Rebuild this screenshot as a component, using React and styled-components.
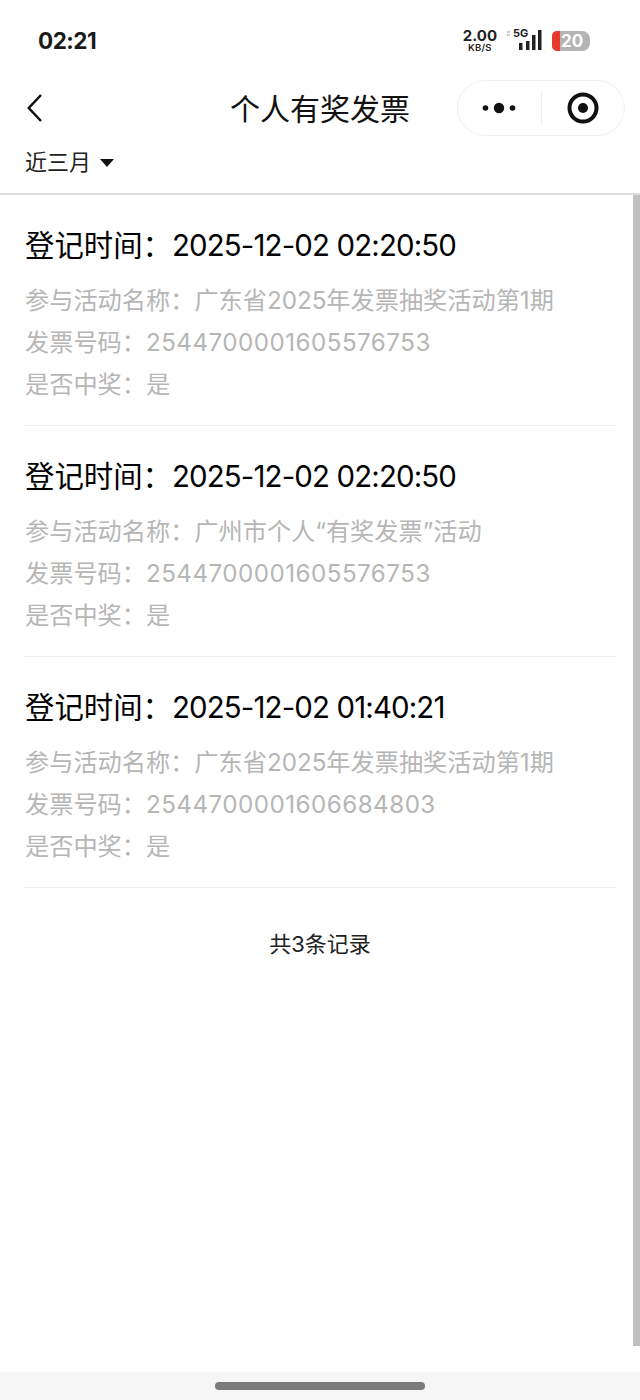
import React from 'react'
import styled, { createGlobalStyle } from 'styled-components'

const GlobalStyle = createGlobalStyle`
  html, body {
    margin: 0;
    padding: 0;
    background: #fff;
  }
  body {
    font-family: 'Inter', 'Noto Sans CJK SC', sans-serif;
  }
`

const Page = styled.div`
  position: relative;
  width: 640px;
  height: 1400px;
  overflow: hidden;
  display: flex;
  flex-direction: column;
  background: #fff;
`

const StatusBar = styled.div`
  height: 80px;
  flex: none;
  box-sizing: border-box;
  padding: 0 50px 0 38px;
  display: flex;
  align-items: center;
  justify-content: space-between;
`

const Clock = styled.div`
  font-size: 22.5px;
  font-weight: 700;
  letter-spacing: -0.5px;
  color: #1a1a1a;
`

const StatusRight = styled.div`
  display: flex;
  align-items: center;
  gap: 10px;
`

const Speed = styled.div`
  display: flex;
  flex-direction: column;
  align-items: center;
  font-weight: 700;
  color: #222;
`

const SpeedValue = styled.span`
  font-size: 15px;
  line-height: 14px;
`

const SpeedUnit = styled.span`
  font-size: 9.5px;
  line-height: 9px;
  font-weight: 600;
  letter-spacing: 0.3px;
`

const Battery = styled.div`
  width: 38px;
  height: 20px;
  margin-top: 2px;
  border-radius: 5px 8px 8px 5px;
  overflow: hidden;
  background: #b4b4b4;
  display: flex;
  align-items: center;
  color: #fff;
  font-size: 17px;
  font-weight: 700;
`

const BatteryFill = styled.div`
  width: 8px;
  height: 100%;
  background: #e8392b;
  flex: none;
`

const BatteryText = styled.span`
  margin-left: 1px;
  line-height: 20px;
`

const NavBar = styled.div`
  height: 56px;
  flex: none;
  box-sizing: border-box;
  padding: 0 15px 0 27px;
  display: flex;
  align-items: center;
  justify-content: space-between;
  position: relative;
`

const BackButton = styled.div`
  width: 15px;
  height: 28px;
  display: flex;
`

const NavTitle = styled.div`
  position: absolute;
  left: 230px;
  top: 0;
  line-height: 58px;
  font-size: 30px;
  color: #111;
`

const Capsule = styled.div`
  width: 168px;
  height: 56px;
  box-sizing: border-box;
  border: 1px solid #f1f1f1;
  border-radius: 28px;
  display: flex;
  align-items: center;
`

const CapsulePart = styled.div`
  flex: 1;
  height: 34px;
  display: flex;
  align-items: center;
  justify-content: center;
  & + & {
    border-left: 1px solid #eeeeee;
  }
`

const FilterBar = styled.div`
  height: 59px;
  flex: none;
  box-sizing: border-box;
  padding: 0 25px 10px;
  display: flex;
  align-items: center;
  gap: 9px;
  border-bottom: 2px solid #dcdcdc;
  font-size: 22px;
  color: #222;
`

const Caret = styled.span`
  width: 0;
  height: 0;
  margin-top: 7px;
  border-left: 7px solid transparent;
  border-right: 7px solid transparent;
  border-top: 8px solid #111;
`

const List = styled.div`
  padding: 0 25px;
  flex: 1;
`

const Record = styled.div`
  height: 231px;
  box-sizing: border-box;
  padding-top: 29px;
  border-bottom: 1px solid #efefef;
  &:last-of-type {
    height: 230px;
  }
`

const RecordTitle = styled.div`
  font-size: 29.4px;
  line-height: 44px;
  height: 56px;
  color: #000;
  white-space: nowrap;
`

const TimeText = styled.span`
  letter-spacing: -0.85px;
`

const RecordLine = styled.div`
  font-size: 24.2px;
  line-height: 42px;
  color: #b6b6b6;
  white-space: nowrap;
`

const NumberText = styled.span`
  letter-spacing: 0.47px;
`

const Total = styled.div`
  text-align: center;
  font-size: 22px;
  line-height: 30px;
  margin-top: 41px;
  color: #222;
`

const Scrollbar = styled.div`
  position: absolute;
  right: 0;
  top: 195px;
  width: 7px;
  height: 1151px;
  background: #c0c0c0;
`

const BottomBar = styled.div`
  height: 28px;
  flex: none;
  background: #f6f6f6;
  display: flex;
  align-items: center;
  justify-content: center;
`

const HomeIndicator = styled.div`
  width: 210px;
  height: 8px;
  border-radius: 4px;
  background: #7b7b7b;
`

const records = [
  { time: '2025-12-02 02:20:50', name: '广东省2025年发票抽奖活动第1期', no: '2544700001605576753' },
  { time: '2025-12-02 02:20:50', name: '广州市个人“有奖发票”活动', no: '2544700001605576753' },
  { time: '2025-12-02 01:40:21', name: '广东省2025年发票抽奖活动第1期', no: '2544700001606684803' }
]

const App = () => (
  <Page>
    <GlobalStyle />
    <StatusBar>
      <Clock>02:21</Clock>
      <StatusRight>
        <Speed>
          <SpeedValue>2.00</SpeedValue>
          <SpeedUnit>KB/S</SpeedUnit>
        </Speed>
        <svg width='35' height='26' viewBox='0 0 35 26'>
          <text x='6' y='10' fontSize='11' fontWeight='700' fontFamily='Inter, sans-serif' fill='#222'>5G</text>
          <rect x='0' y='4' width='3' height='2' fill='#ccc' />
          <rect x='0' y='7' width='3' height='2' fill='#ccc' />
          <rect x='12' y='16' width='3.5' height='7' fill='#222' />
          <rect x='19' y='14' width='3.5' height='9' fill='#222' />
          <rect x='25' y='8' width='3.5' height='15' fill='#222' />
          <rect x='31' y='3' width='3.5' height='20' fill='#222' />
        </svg>
        <Battery>
          <BatteryFill />
          <BatteryText>20</BatteryText>
        </Battery>
      </StatusRight>
    </StatusBar>
    <NavBar>
      <BackButton>
        <svg width='15' height='28' viewBox='0 0 15 28' fill='none'>
          <path d='M14 1 L1.8 14 L14 27' stroke='#111' strokeWidth='2.5' />
        </svg>
      </BackButton>
      <NavTitle>个人有奖发票</NavTitle>
      <Capsule>
        <CapsulePart>
          <svg width='34' height='12' viewBox='0 0 34 12'>
            <circle cx='3.5' cy='6' r='2.8' fill='#111' />
            <circle cx='17' cy='6' r='5.2' fill='#111' />
            <circle cx='30.5' cy='6' r='2.8' fill='#111' />
          </svg>
        </CapsulePart>
        <CapsulePart>
          <svg width='32' height='32' viewBox='0 0 32 32' fill='none'>
            <circle cx='16' cy='16' r='13.5' stroke='#111' strokeWidth='4' />
            <circle cx='16' cy='16' r='5' fill='#111' />
          </svg>
        </CapsulePart>
      </Capsule>
    </NavBar>
    <FilterBar>
      近三月
      <Caret />
    </FilterBar>
    <List>
      {records.map((item, index) => (
        <Record key={index}>
          <RecordTitle>
            登记时间：<TimeText>{item.time}</TimeText>
          </RecordTitle>
          <RecordLine>参与活动名称：{item.name}</RecordLine>
          <RecordLine>
            发票号码：<NumberText>{item.no}</NumberText>
          </RecordLine>
          <RecordLine>是否中奖：是</RecordLine>
        </Record>
      ))}
      <Total>共3条记录</Total>
    </List>
    <Scrollbar />
    <BottomBar>
      <HomeIndicator />
    </BottomBar>
  </Page>
)

export default App
